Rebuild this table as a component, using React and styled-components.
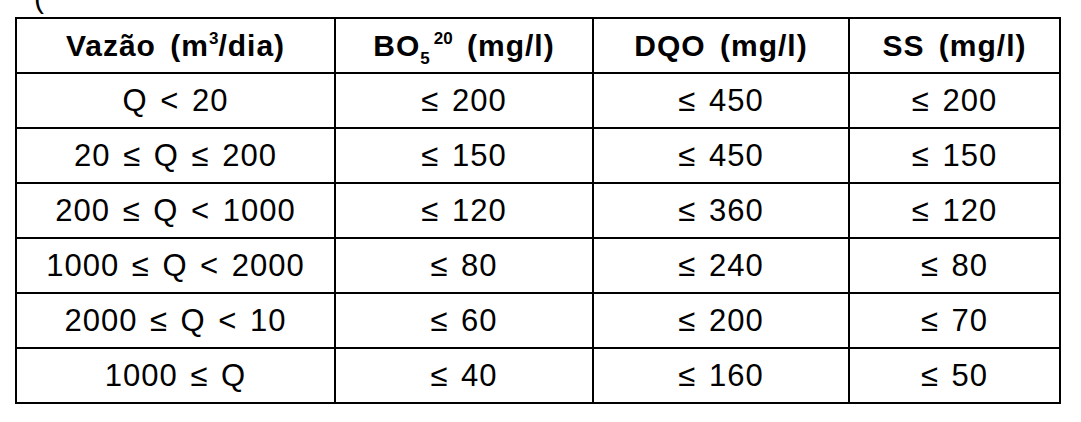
import styled, { createGlobalStyle } from "styled-components";

const GlobalStyle = createGlobalStyle`
  html, body {
    margin: 0;
    padding: 0;
    background: #ffffff;
  }
  body {
    font-family: "Liberation Sans", Arial, sans-serif;
    color: #000;
  }
`;

const Page = styled.div`
  width: 1081px;
  height: 422px;
  overflow: hidden;
  background: #fff;
`;

// bottom of a parenthesis from the line above, cut by the page edge
const Fragment = styled.div`
  height: 17px;
  overflow: hidden;
  padding-left: 34px;
  font-size: 30px;
  line-height: 20px;
  & > span {
    display: block;
    margin-top: -12px;
  }
`;

const Table = styled.table`
  margin-left: 15px;
  border-collapse: collapse;
  border: 2px solid #000;
  table-layout: fixed;
  width: 1044px;
`;

const Head = styled.th`
  height: 53px;
  padding: 0;
  border: 2px solid #000;
  border-bottom-width: 1px;
  font-size: 30px;
  font-weight: 700;
  letter-spacing: 1px;
  word-spacing: 5px;
  text-align: center;
  vertical-align: middle;
  white-space: pre;
`;

const Sup = styled.sup`
  font-size: 17px;
  vertical-align: 12px;
  line-height: 0;
  letter-spacing: 0;
  margin-left: ${p => p.$gap || 0}px;
`;

const Sub = styled.sub`
  font-size: 17px;
  vertical-align: -8px;
  line-height: 0;
`;

const Cell = styled.td`
  height: 53px;
  padding: 0;
  border: 2px solid #000;
  font-size: 31px;
  letter-spacing: 1px;
  word-spacing: 3px;
  text-align: center;
  vertical-align: middle;
  white-space: pre;
`;

const columns = [319, 258, 256, 211];

const rows = [
  ["Q < 20", "≤ 200", "≤ 450", "≤ 200"],
  ["20 ≤ Q ≤ 200", "≤ 150", "≤ 450", "≤ 150"],
  ["200 ≤ Q < 1000", "≤ 120", "≤ 360", "≤ 120"],
  ["1000 ≤ Q < 2000", "≤ 80", "≤ 240", "≤ 80"],
  ["2000 ≤ Q < 10", "≤ 60", "≤ 200", "≤ 70"],
  ["1000 ≤ Q", "≤ 40", "≤ 160", "≤ 50"],
];

export default function App() {
  return (
    <Page>
      <GlobalStyle />
      <Fragment>
        <span>(</span>
      </Fragment>
      <Table>
        <colgroup>
          {columns.map((w, i) => (
            <col key={i} style={{ width: w }} />
          ))}
        </colgroup>
        <thead>
          <tr>
            <Head>
              Vazão (m<Sup>3</Sup>/dia)
            </Head>
            <Head>
              BO<Sub>5</Sub>
              <Sup $gap={3}>20</Sup> (mg/l)
            </Head>
            <Head>DQO (mg/l)</Head>
            <Head>SS (mg/l)</Head>
          </tr>
        </thead>
        <tbody>
          {rows.map((row, i) => (
            <tr key={i}>
              {row.map((value, j) => (
                <Cell key={j}>{value}</Cell>
              ))}
            </tr>
          ))}
        </tbody>
      </Table>
    </Page>
  );
}
